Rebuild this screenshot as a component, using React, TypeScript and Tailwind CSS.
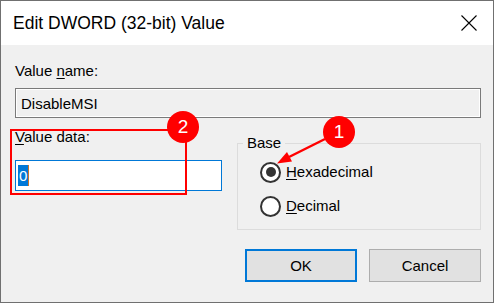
import React from 'react';

const font = "font-['Liberation_Sans',Arial,sans-serif]";

const Radio: React.FC<{ checked?: boolean; label: string; mnemonic: string }> = ({ checked, label, mnemonic }) => (
  <div className="flex items-center gap-[5px] h-[20px]">
    <div className="w-[21px] h-[21px] rounded-full border-2 border-[#333] bg-white flex items-center justify-center">
      {checked && <div className="w-[10px] h-[10px] rounded-full bg-[#333]" />}
    </div>
    <span className="text-[15px] leading-[18px] text-black">
      <u className="underline-offset-2">{mnemonic}</u>
      {label.slice(mnemonic.length)}
    </span>
  </div>
);

export default function App() {
  return (
    <div className={`relative w-[495px] h-[304px] bg-white ${font}`}>
      <div className="w-[494px] h-[303px] border border-[#707070] flex flex-col">
        {/* title bar */}
        <div className="h-[44px] bg-white flex items-center justify-between pl-[12px] pr-[16px]">
          <span className="text-[17.5px] text-black">Edit DWORD (32-bit) Value</span>
          <svg width="16" height="16" viewBox="0 0 16 16" className="text-black">
            <path d="M0.5 0.5 L15.5 15.5 M15.5 0.5 L0.5 15.5" stroke="currentColor" strokeWidth="1.1" fill="none" />
          </svg>
        </div>

        {/* body */}
        <div className="flex-1 bg-[#f0f0f0] pl-[14px] pr-[12px] pt-[17px] text-[15px] leading-[18px] text-black">
          <div>
            Value <u className="underline-offset-2">n</u>ame:
          </div>
          <div className="mt-[8px] h-[30px] w-[466px] border border-[#7a7a7a] shadow-[inset_0_0_0_1px_#ffffff] flex items-center pl-[5px] pt-px">
            DisableMSI
          </div>

          <div className="flex items-start gap-[15px]">
            <div className="w-[207px] mt-[10px]">
              <div>
                <u className="underline-offset-2">V</u>alue data:
              </div>
              <div className="mt-[14px] h-[31px] border border-[#0078d7] bg-white flex items-center pl-[2px]">
                <span className="bg-[#0078d7] text-white leading-[21px] px-[1px] border-r border-[#c8742c]">0</span>
              </div>
            </div>

            <fieldset className="mt-[16px] w-[244px] border border-[#dcdcdc] pt-[10px] pb-[13px] pl-[22px]">
              <legend className="ml-[-17px] px-[4px] leading-[18px]">Base</legend>
              <div className="flex flex-col gap-[14px]">
                <Radio checked label="Hexadecimal" mnemonic="H" />
                <Radio label="Decimal" mnemonic="D" />
              </div>
            </fieldset>
          </div>

          <div className="mt-[19px] flex justify-end gap-[12px]">
            <button className="w-[112px] h-[33px] border-2 border-[#0078d7] bg-[#e1e1e1] text-[15px] text-black">OK</button>
            <button className="w-[112px] h-[33px] border border-[#adadad] bg-[#e1e1e1] text-[15px] text-black">Cancel</button>
          </div>
        </div>
      </div>

      {/* annotations */}
      <div className="absolute left-[10px] top-[129px] w-[177px] h-[66px] border-2 border-[#ff0000] pointer-events-none" />
      <div className="absolute left-[167px] top-[111px] w-[32px] h-[32px] rounded-full bg-[#ff0000] text-white text-[19px] flex items-center justify-center">2</div>
      <svg className="absolute left-0 top-0 pointer-events-none" width="495" height="304">
        <line x1="325" y1="139" x2="289" y2="157" stroke="#ff0000" strokeWidth="2.5" />
        <polygon points="277,163.5 292,161.5 287,152" fill="#ff0000" />
      </svg>
      <div className="absolute left-[323px] top-[116px] w-[32px] h-[32px] rounded-full bg-[#ff0000] text-white text-[19px] flex items-center justify-center">1</div>
    </div>
  );
}
